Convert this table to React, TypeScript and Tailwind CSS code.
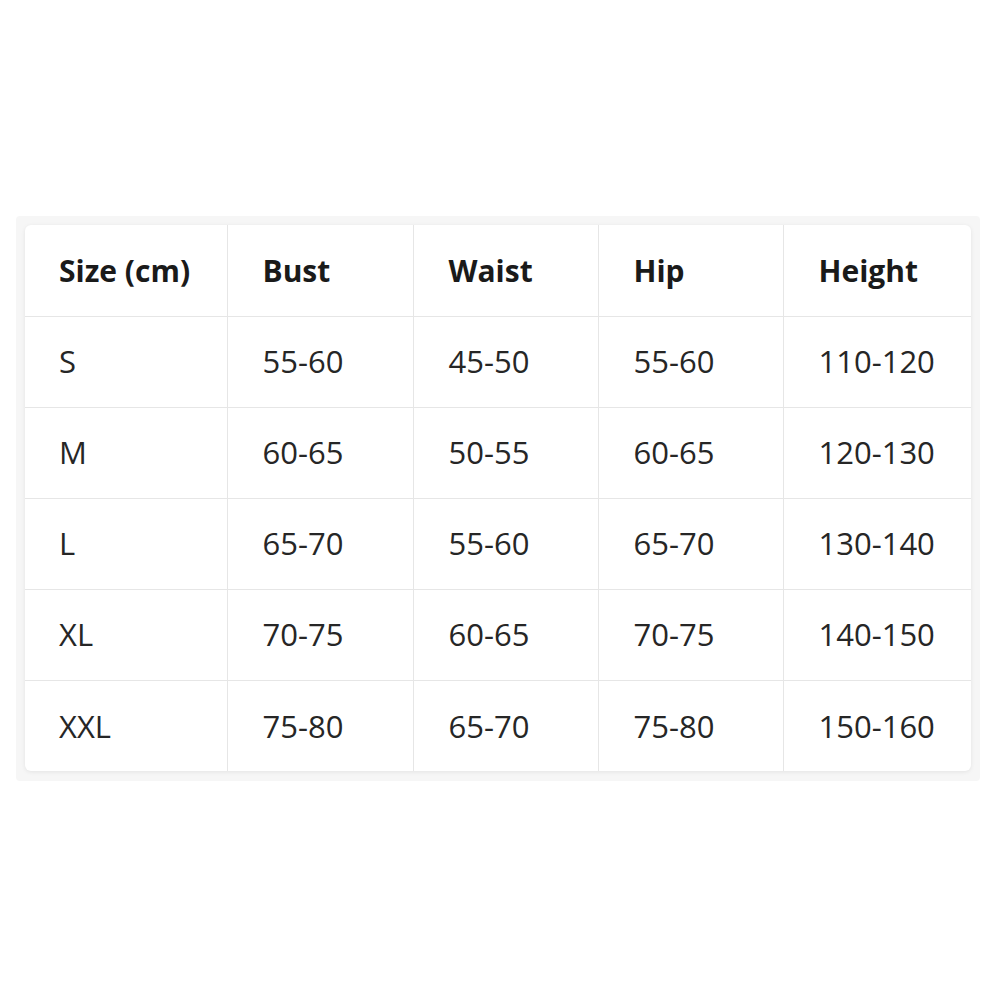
import React from 'react';

const rows = [
  ['S', '55-60', '45-50', '55-60', '110-120'],
  ['M', '60-65', '50-55', '60-65', '120-130'],
  ['L', '65-70', '55-60', '65-70', '130-140'],
  ['XL', '70-75', '60-65', '70-75', '140-150'],
  ['XXL', '75-80', '65-70', '75-80', '150-160'],
];

const headers = ['Size (cm)', 'Bust', 'Waist', 'Hip', 'Height'];

export default function App() {
  return (
    <div className="w-[1000px] h-[1000px] bg-white pt-[216px] px-4" style={{ fontFamily: '"Open Sans", "Noto Sans", sans-serif' }}>
      <div className="w-[964px] bg-[#f6f6f6] p-[9px] pb-[10px] rounded-sm">
        <div className="bg-white rounded-md shadow-[0_1px_4px_rgba(0,0,0,0.08)] overflow-hidden">
          <table className="w-[946px] border-collapse table-fixed">
            <colgroup>
              <col className="w-[202px]" />
              <col className="w-[186px]" />
              <col className="w-[185px]" />
              <col className="w-[185px]" />
              <col className="w-[188px]" />
            </colgroup>
            <thead>
              <tr className="h-[91px]">
                {headers.map((h, i) => (
                  <th
                    key={h}
                    className={`text-left font-bold text-[30px] text-[#1a1a1a] border-b border-[#e6e6e6] ${i === 0 ? 'pl-[34px]' : 'pl-[35px] border-l'}`}
                  >
                    {h}
                  </th>
                ))}
              </tr>
            </thead>
            <tbody>
              {rows.map((r, ri) => (
                <tr key={r[0]} className="h-[91px]">
                  {r.map((c, i) => (
                    <td
                      key={i}
                      className={`text-[31px] text-[#262626] border-[#e6e6e6] ${ri < rows.length - 1 ? 'border-b' : ''} ${i === 0 ? 'pl-[34px]' : 'pl-[35px] border-l'}`}
                    >
                      {c}
                    </td>
                  ))}
                </tr>
              ))}
            </tbody>
          </table>
        </div>
      </div>
    </div>
  );
}
